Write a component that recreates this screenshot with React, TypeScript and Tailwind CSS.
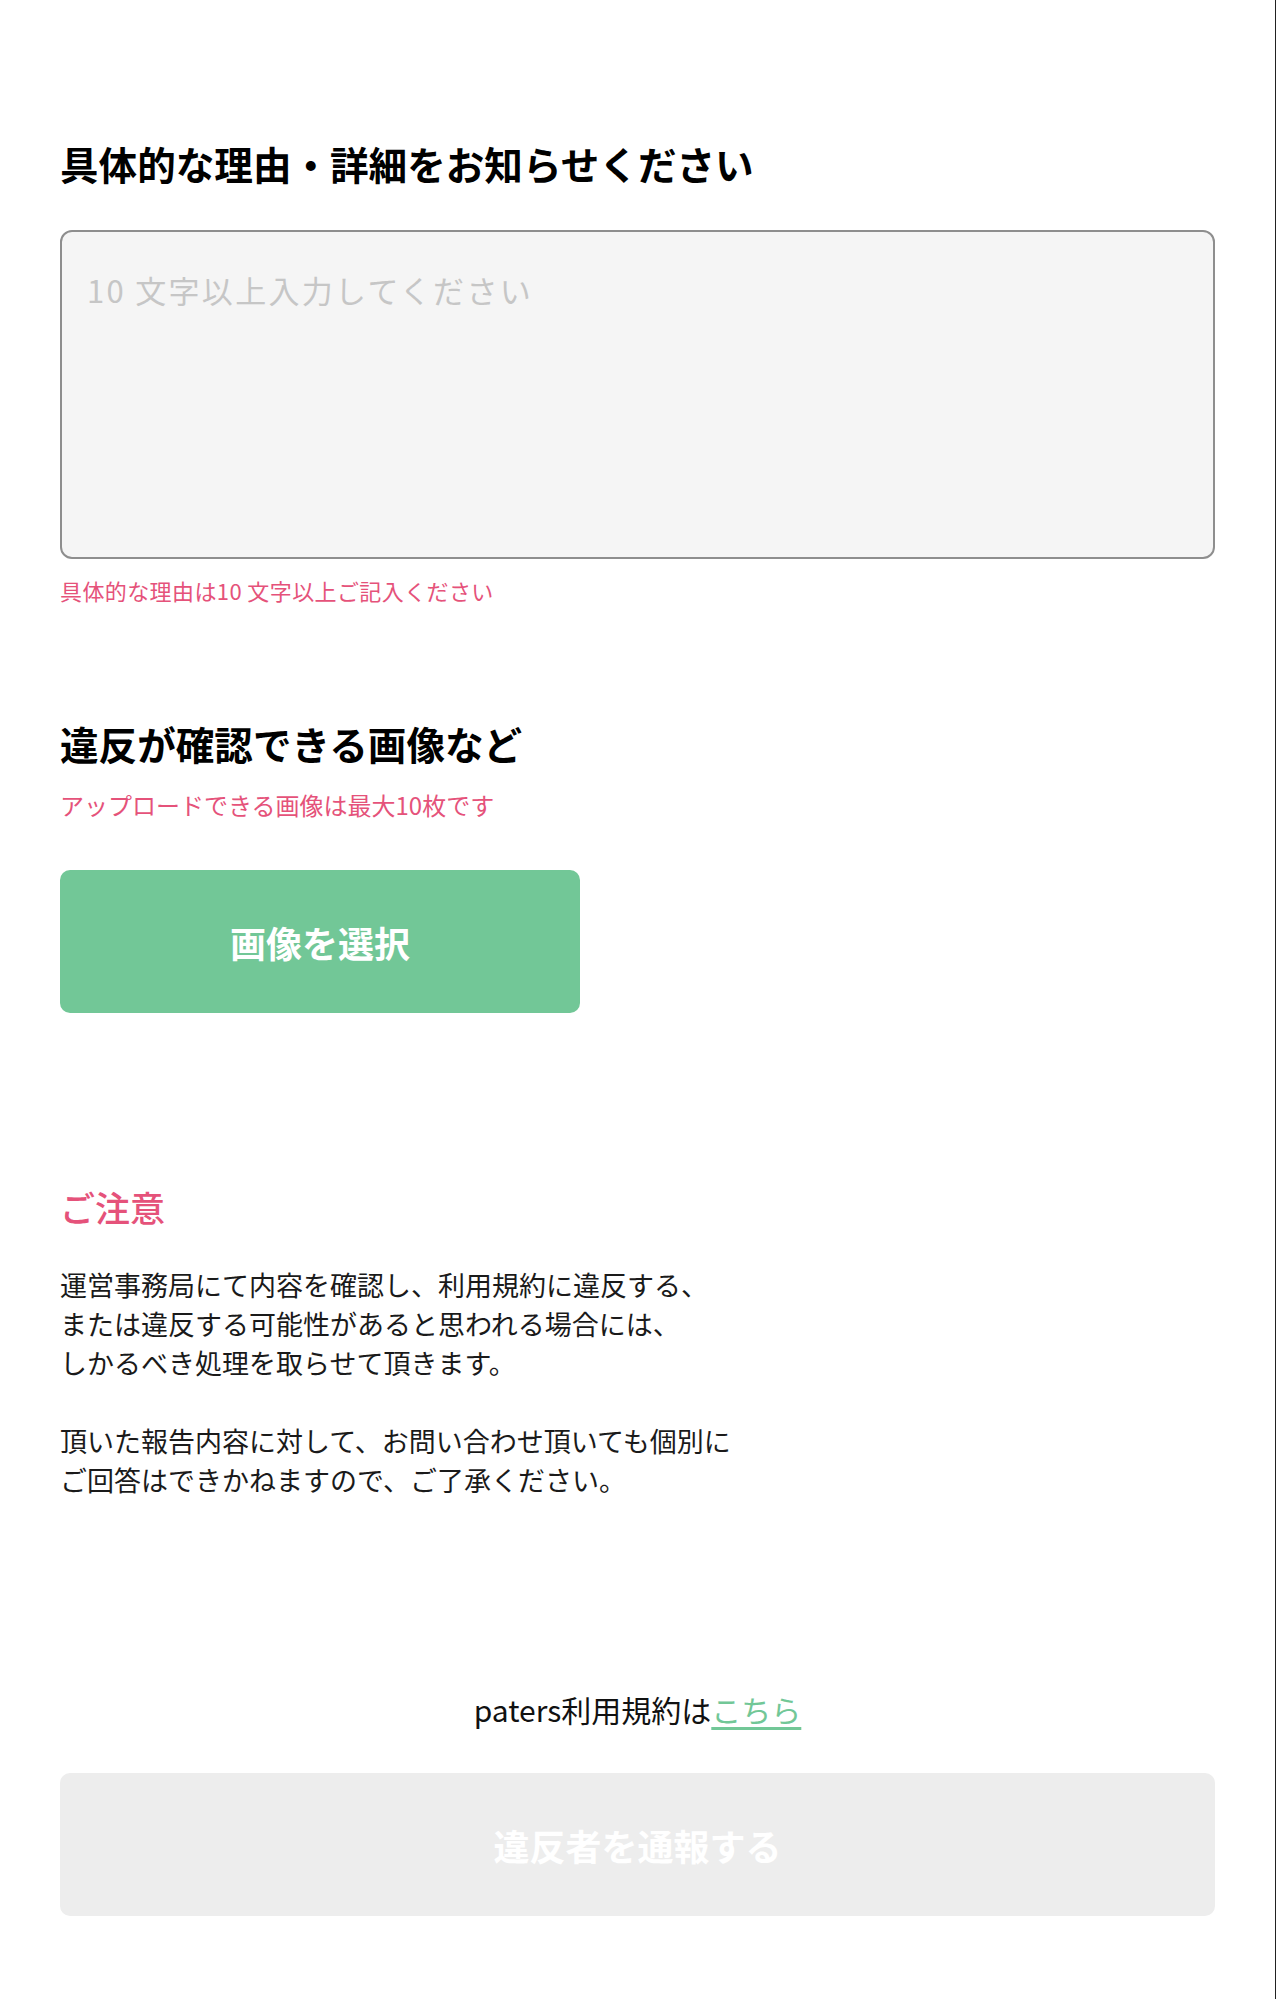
import React, { useState } from 'react';

const font = { fontFamily: '"Noto Sans CJK JP", "Noto Sans", sans-serif' };

const ReportForm = () => {
    const [detail, setDetail] = useState<string>('');
    const canSubmit = detail.length >= 10;

    return (
        <div className="min-h-[1999px] w-[1276px] border-r border-[#222] bg-white" style={font}>
            <div className="px-[60px] pt-[135px] pb-[80px]">
                <h2 className="text-[38.6px] leading-[56px] font-bold text-black">
                    具体的な理由・詳細をお知らせください
                </h2>
                <textarea
                    value={detail}
                    onChange={(e: React.ChangeEvent<HTMLTextAreaElement>) => setDetail(e.target.value)}
                    placeholder="10 文字以上入力してください"
                    className="mt-[39px] block h-[329px] w-full resize-none rounded-[12px] border-2 border-[#8e8e8e] bg-[#f5f5f5] pl-[25px] pr-[25px] pt-[35px] text-[31px] leading-[45px] tracking-[2.3px] text-[#222] outline-none placeholder:text-[#c6c6c6]"
                />
                <p className="mt-[15px] text-[22px] leading-[32px] tracking-[0.4px] text-[#e5527a]">
                    具体的な理由は10 文字以上ご記入ください
                </p>

                <h2 className="mt-[109px] text-[38.6px] leading-[56px] font-bold text-black">
                    違反が確認できる画像など
                </h2>
                <p className="mt-[18px] text-[24px] leading-[32px] text-[#e5527a]">
                    アップロードできる画像は最大10枚です
                </p>
                <button className="mt-[49px] flex h-[143px] w-[520px] items-center justify-center rounded-[10px] bg-[#72c797] text-[36px] font-bold text-white">
                    画像を選択
                </button>

                <h3 className="mt-[169px] text-[35px] leading-[50px] font-medium text-[#e5527a]">ご注意</h3>
                <p className="mt-[33px] text-[27px] leading-[39px] text-[#1a1a1a]">
                    運営事務局にて内容を確認し、利用規約に違反する、
                    <br />
                    または違反する可能性があると思われる場合には、
                    <br />
                    しかるべき処理を取らせて頂きます。
                    <br />
                    <br />
                    頂いた報告内容に対して、お問い合わせ頂いても個別に
                    <br />
                    ご回答はできかねますので、ご了承ください。
                </p>

                <p className="mt-[190px] text-center text-[30px] leading-[40px] text-[#111]">
                    paters利用規約は
                    <a href="#" className="text-[#72c797] underline underline-offset-[5px]">
                        こちら
                    </a>
                </p>
                <button
                    disabled={!canSubmit}
                    className={
                        canSubmit
                            ? 'mt-[44px] flex h-[143px] w-full items-center justify-center rounded-[10px] bg-[#72c797] text-[36px] font-bold text-white'
                            : 'mt-[44px] flex h-[143px] w-full items-center justify-center rounded-[10px] bg-[#ededed] text-[36px] font-bold text-white'
                    }
                >
                    違反者を通報する
                </button>
            </div>
        </div>
    );
};

export default function App() {
    return <ReportForm />;
}
